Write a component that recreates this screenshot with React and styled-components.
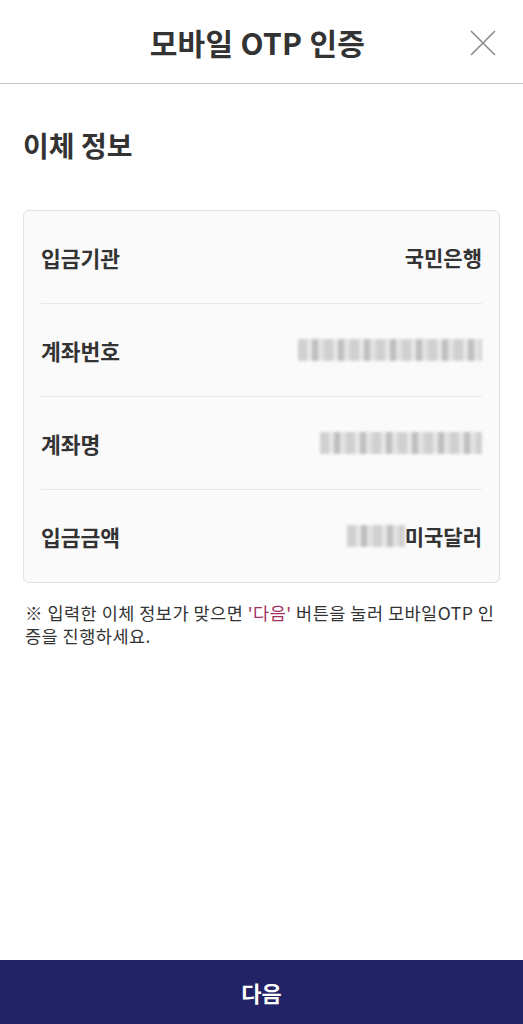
import React from "react";
import styled, { createGlobalStyle } from "styled-components";

const GlobalStyle = createGlobalStyle`
    html, body {
        margin: 0;
        padding: 0;
        background: #fff;
    }
    body {
        font-family: "Noto Sans CJK KR", "Noto Sans", sans-serif;
        color: #333;
    }
`;

const Page = styled.div`
    display: flex;
    flex-direction: column;
    width: 523px;
    height: 1024px;
    box-sizing: border-box;
`;
const Header = styled.header`
    position: relative;
    display: flex;
    justify-content: center;
    align-items: center;
    height: 83px;
    border-bottom: 1px solid #c4c4c4;
    flex-shrink: 0;
`;
const Title = styled.h1`
    margin: 0 0 0 -8px;
    font-size: 30px;
    font-weight: 700;
    color: #333;
    letter-spacing: 0.3px;
`;
const CloseButton = styled.button`
    position: absolute;
    right: 27px;
    top: 30px;
    width: 26px;
    height: 26px;
    padding: 0;
    border: none;
    background: none;
`;
const Content = styled.main`
    flex: 1;
    padding: 40px 23px 0;
`;
const SectionTitle = styled.h2`
    margin: 0 0 44px;
    font-size: 28px;
    font-weight: 700;
    color: #333;
    line-height: 42px;
`;
const Card = styled.div`
    border: 1px solid #e1e1e1;
    border-radius: 6px;
    background: #fafafa;
    padding: 0 17px;
`;
const Row = styled.div`
    display: flex;
    justify-content: space-between;
    align-items: center;
    height: 92px;
    border-top: ${props => (props.first ? "none" : "1px solid #e8e8e8")};
`;
const Label = styled.span`
    font-size: 21.5px;
    font-weight: 700;
    color: #333;
`;
const Value = styled.span`
    display: flex;
    align-items: center;
    font-size: 21px;
    font-weight: 700;
    color: #333;
`;
const Masked = styled.span`
    display: inline-block;
    width: ${props => props.w}px;
    height: 22px;
    background: repeating-linear-gradient(
        90deg,
        #c9c9c9 0 9px,
        #e4e4e4 9px 14px,
        #b5b5b5 14px 20px,
        #dedede 20px 26px
    );
    filter: blur(1.5px);
    opacity: 0.85;
`;
const Note = styled.p`
    margin: 18px 0 0;
    font-size: 17.5px;
    line-height: 23px;
    letter-spacing: 0.5px;
    color: #333;
    padding-left: 2px;
`;
const Highlight = styled.span`
    color: #a3315f;
`;
const Footer = styled.button`
    flex-shrink: 0;
    height: 64px;
    border: none;
    background: #222266;
    color: #fff;
    font-family: inherit;
    font-size: 22px;
    font-weight: 700;
`;

function App() {
    return (
        <Page>
            <GlobalStyle />
            <Header>
                <Title>모바일 OTP 인증</Title>
                <CloseButton aria-label="닫기">
                    <svg width="26" height="26" viewBox="0 0 26 26">
                        <path d="M1 1L25 25M25 1L1 25" stroke="#8a8a8a" strokeWidth="1.6" />
                    </svg>
                </CloseButton>
            </Header>
            <Content>
                <SectionTitle>이체 정보</SectionTitle>
                <Card>
                    <Row first>
                        <Label>입금기관</Label>
                        <Value>국민은행</Value>
                    </Row>
                    <Row>
                        <Label>계좌번호</Label>
                        <Value>
                            <Masked w={184} />
                        </Value>
                    </Row>
                    <Row>
                        <Label>계좌명</Label>
                        <Value>
                            <Masked w={162} />
                        </Value>
                    </Row>
                    <Row>
                        <Label>입금금액</Label>
                        <Value>
                            <Masked w={58} />
                            미국달러
                        </Value>
                    </Row>
                </Card>
                <Note>
                    ※ 입력한 이체 정보가 맞으면 <Highlight>'다음'</Highlight> 버튼을 눌러 모바일OTP 인증을 진행하세요.
                </Note>
            </Content>
            <Footer>다음</Footer>
        </Page>
    );
}

export default App;
